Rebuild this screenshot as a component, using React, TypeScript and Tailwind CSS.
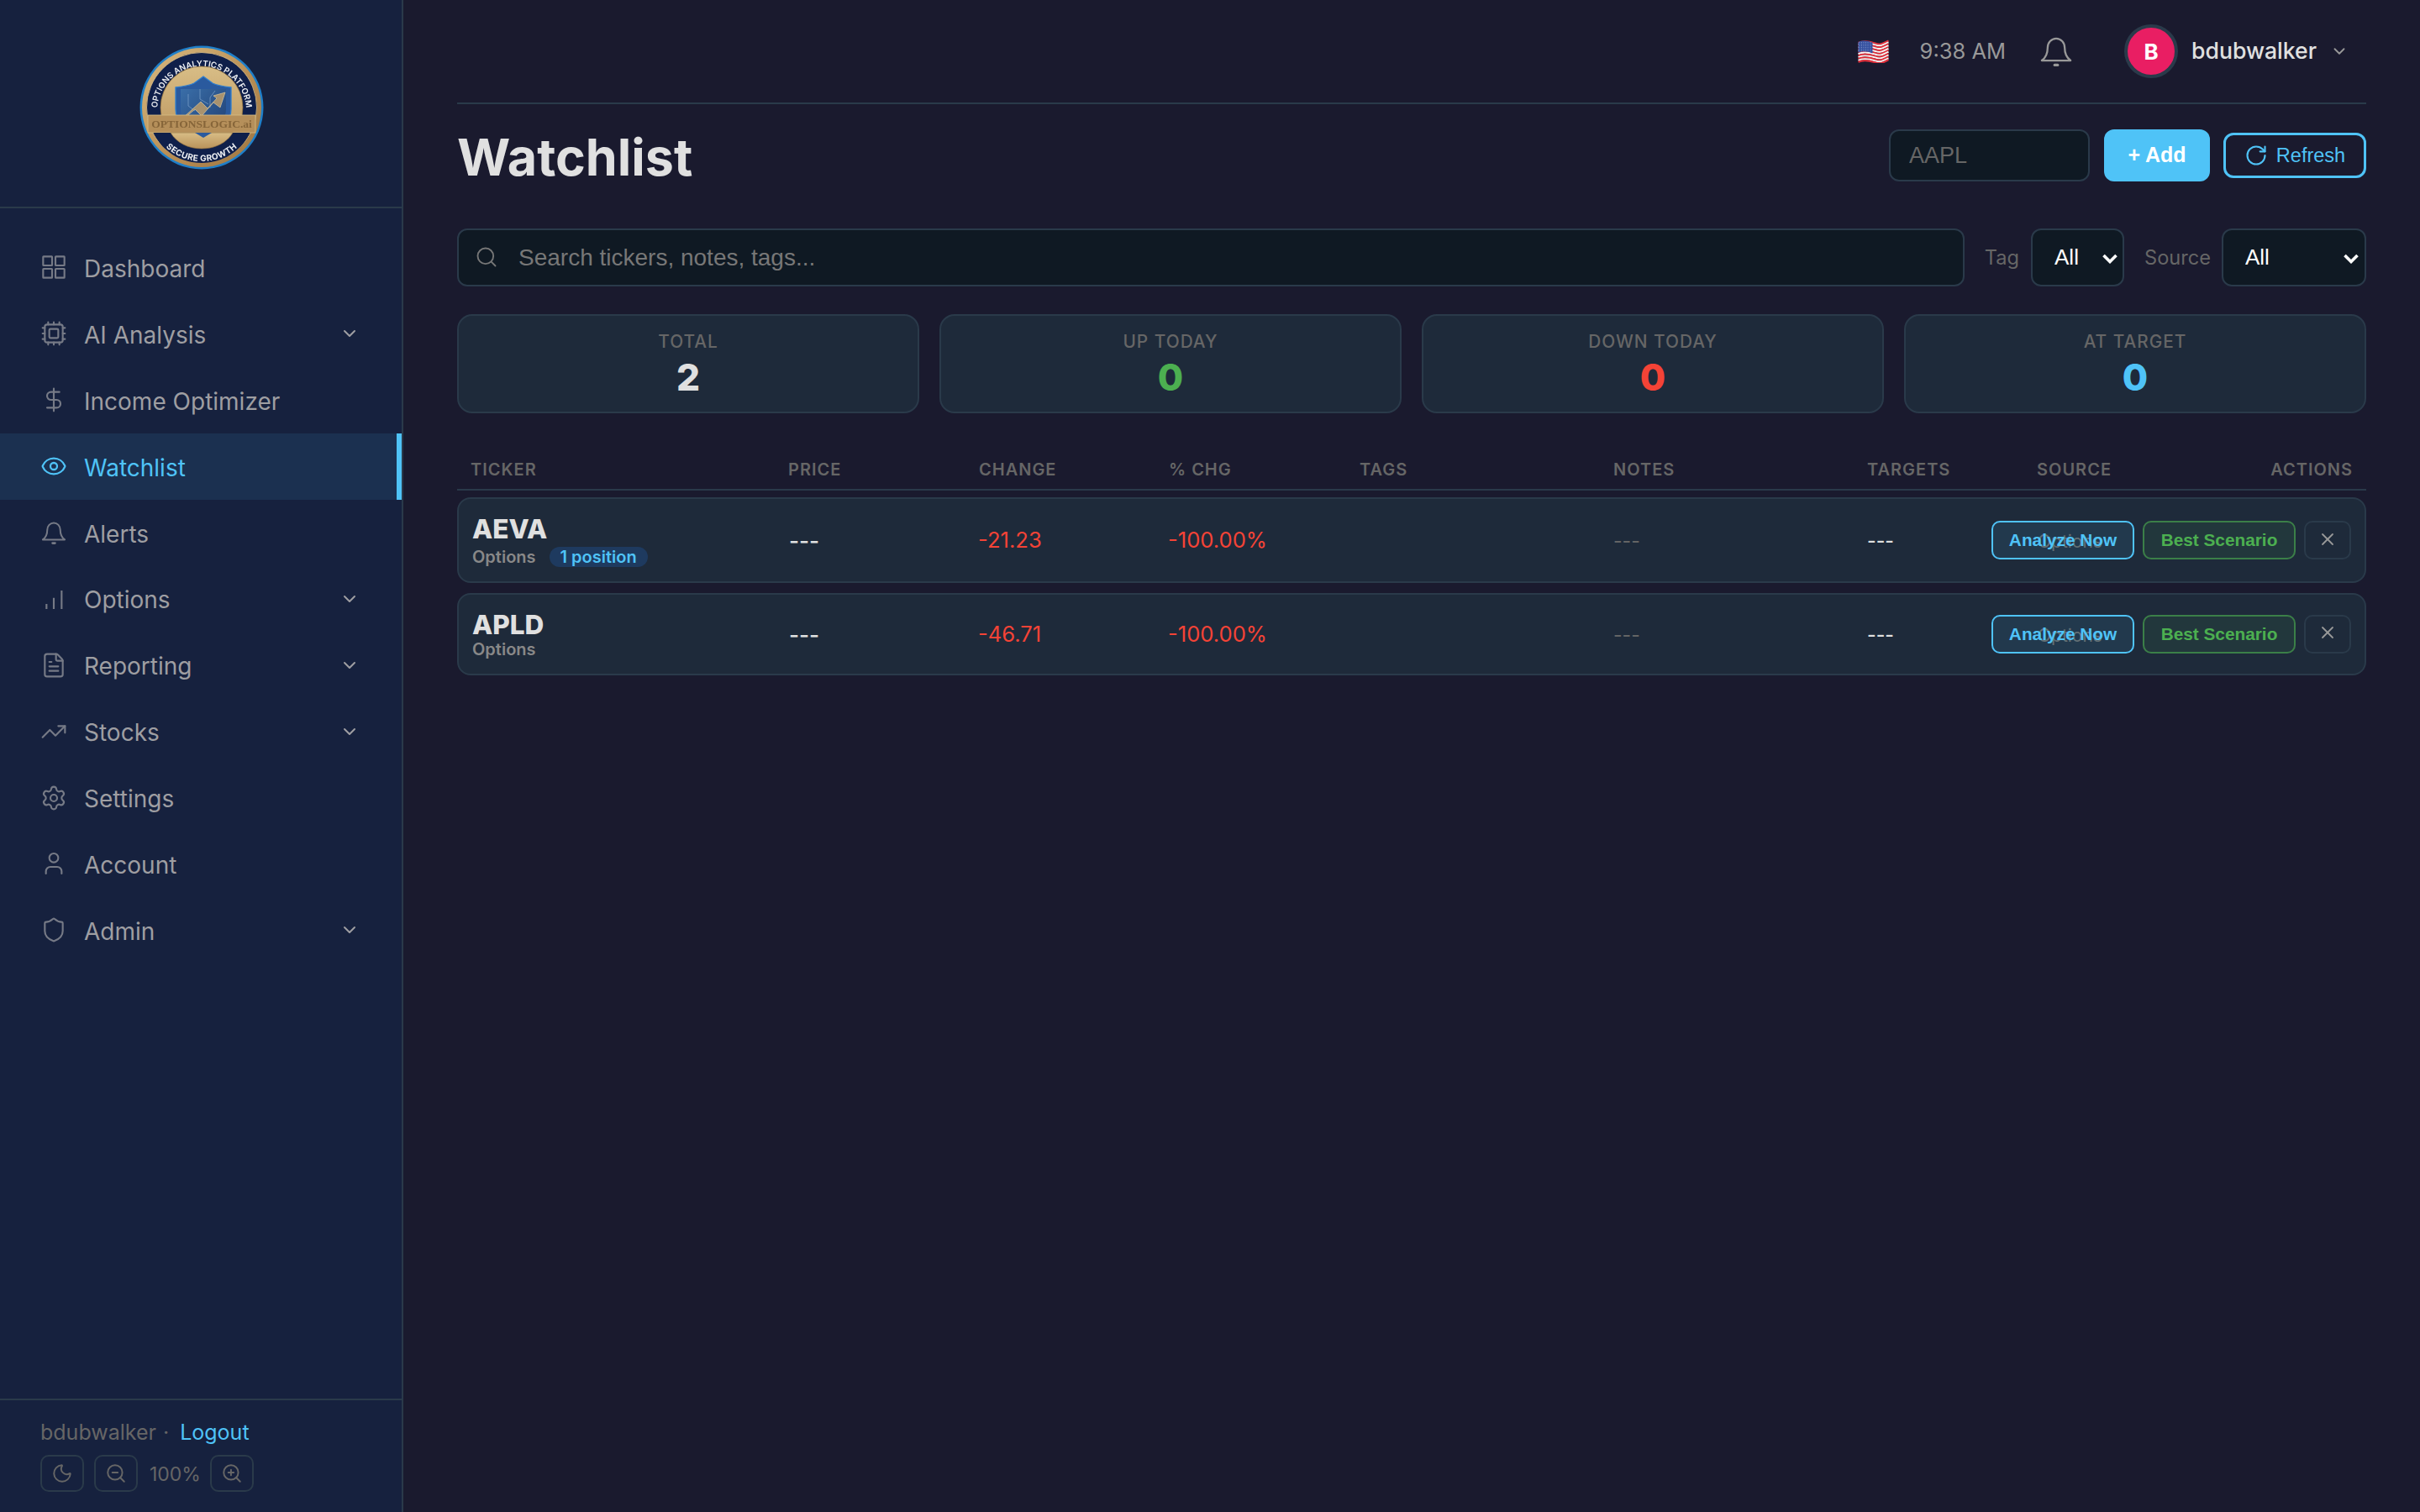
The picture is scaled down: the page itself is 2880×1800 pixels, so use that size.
import React from "react";
import { ChevronDown, Cpu, DollarSign, Eye, FileText, TrendingUp, Settings, User, Shield, Moon, ZoomIn, ZoomOut, Search, RotateCw, X } from "lucide-react";

function GridIcon({ className }: { className?: string }) {
  return (
    <svg viewBox="0 0 24 24" width="32" height="32" fill="none" stroke="currentColor" strokeWidth="1.6" className={className}>
      <rect x="2.5" y="2.5" width="8" height="8" rx="0.4" />
      <rect x="13.5" y="2.5" width="8" height="8" rx="0.4" />
      <rect x="2.5" y="13.5" width="8" height="8" rx="0.4" />
      <rect x="13.5" y="13.5" width="8" height="8" rx="0.4" />
    </svg>
  );
}
function BellIcon({ className, size = 32, sw = 1.5 }: { className?: string; size?: number; sw?: number }) {
  return (
    <svg viewBox="0 0 24 24" width={size} height={size} fill="none" stroke="currentColor" strokeWidth={sw} strokeLinecap="round" strokeLinejoin="round" className={className}>
      <path d="M6.200 9.500a5.800 6.200 0 0 1 11.600 0c0 4.500 1.200 6.800 4 8.800H2.200c2.800-2 4-4.300 4-8.800z" />
      <path d="M11 21.400h2" strokeWidth={sw + 0.6} />
    </svg>
  );
}
function BarsIcon({ className }: { className?: string }) {
  return (
    <svg viewBox="0 0 24 24" width="32" height="32" fill="none" stroke="currentColor" strokeWidth="1.6" className={className}>
      <path d="M5.500 21v-4.500M12 21V11M19 21V4.500" />
    </svg>
  );
}

function Logo() {
  return (
    <svg viewBox="0 0 148 148" width="148" height="148" className="blur-[0.35px]">
      <defs>
        <linearGradient id="gold" x1="0" y1="0" x2="1" y2="1">
          <stop offset="0" stopColor="#d9bb82" />
          <stop offset="0.55" stopColor="#b98f55" />
          <stop offset="1" stopColor="#9c7440" />
        </linearGradient>
        <linearGradient id="disc" x1="0" y1="0" x2="0" y2="1">
          <stop offset="0" stopColor="#d8bd86" />
          <stop offset="1" stopColor="#b9925a" />
        </linearGradient>
        <linearGradient id="sh" x1="0" y1="0" x2="1" y2="1">
          <stop offset="0" stopColor="#3a6ea8" />
          <stop offset="1" stopColor="#1f3f73" />
        </linearGradient>
        <path id="topArc" d="M 21 78 A 53 53 0 0 1 127 78" />
        <path id="botArc" d="M 11 74 A 63 64 0 0 0 137 74" />
      </defs>
      <circle cx="74" cy="74" r="73.500" fill="#1f7fc9" />
      <circle cx="74" cy="74" r="71" fill="url(#gold)" />
      <circle cx="74" cy="74" r="65.500" fill="#0f1f4a" stroke="#d8bd86" strokeWidth="0.8" />
      <text fontFamily="Inter, sans-serif" fontSize="9.800" fontWeight="600" fill="#eef0f4">
        <textPath href="#topArc" startOffset="50%" textAnchor="middle">OPTIONS ANALYTICS PLATFORM</textPath>
      </text>
      <circle cx="74" cy="74" r="49" fill="url(#disc)" stroke="#8a6a3a" strokeWidth="0.7" />
      <path d="M76 37l11 8c6 3 14 4 22 5v26c0 18-15 28-33 36-18-8-33-18-33-36V50c8-1 16-2 22-5z" fill="#2a5a9e" stroke="#2f7fd0" strokeWidth="1.300" />
      <path d="M49 52h54v24c0 13-12 24-27 31-15-7-27-18-27-31z" fill="url(#sh)" />
      <path d="M58 58v14l8 6M72 52v12l10 6M90 54l-6 8v12" fill="none" stroke="#7fa3cc" strokeWidth="0.7" />
      <path d="M52 88l14-12 8 8 14-16 8 6 6-18-14 4 4 3-11 12-8-8-21 19z" fill="#a8926e" stroke="#d8c7a0" strokeWidth="0.7" />
      <rect x="10" y="83" width="128" height="21" fill="#b58f5a" stroke="#d8bd86" strokeWidth="0.8" />
      <text x="74" y="98" textAnchor="middle" fontFamily="'Liberation Serif', serif" fontSize="13.500" fontWeight="700" fill="#866539">OPTIONSLOGIC.ai</text>
      <path d="M17 104h114c-9 21-31 36-57 36s-48-15-57-36z" fill="#0f1f4a" />
      <path d="M37 104h74c-7 12-21 19-37 19s-30-7-37-19z" fill="url(#disc)" stroke="#8a6a3a" strokeWidth="0.6" />
      <path d="M66 104h20l-10 6z" fill="#2a5a9e" />
      <text fontFamily="Inter, sans-serif" fontSize="10" fontWeight="700" fill="#eef0f4" letterSpacing="0.4">
        <textPath href="#botArc" startOffset="50%" textAnchor="middle">SECURE GROWTH</textPath>
      </text>
    </svg>
  );
}

function Flag() {
  const stripes = Array.from({ length: 13 }, (_, i) => i);
  const h = 1.9;
  return (
    <svg viewBox="0 0 36 28" width="37" height="28">
      {stripes.map((i) => {
        const y = 3 + i * h;
        return (
          <path
            key={i}
            d={`M0 ${y + 1} C 6 ${y - 2}, 12 ${y - 1}, 20 ${y + 1.5} S 30 ${y + 1}, 36 ${y - 1.5}`}
            fill="none"
            stroke={i % 2 === 0 ? "#e0303c" : "#f6f6f6"}
            strokeWidth={h + 0.2}
          />
        );
      })}
      <path d="M0 3C6 .5 11 1.500 17 3.800V16.500C11 14 6 13.500 0 15.500z" fill="#34509f" />
      {[3.5, 5.5, 7.5, 9.5, 11.5, 13.5].map((y) =>
        [1.5, 4, 6.5, 9, 11.5, 14.5].map((x) => <circle key={`${x}-${y}`} cx={x} cy={y} r="0.45" fill="#c9d3ee" />)
      )}
    </svg>
  );
}

const navIcon = "text-[#767a86] shrink-0";
const lucideProps = { size: 32, strokeWidth: 1.6, className: navIcon };

const nav: { label: string; icon: React.ReactNode; chev?: boolean; active?: boolean }[] = [
  { label: "Dashboard", icon: <GridIcon className={navIcon} /> },
  { label: "AI Analysis", icon: <Cpu {...lucideProps} />, chev: true },
  { label: "Income Optimizer", icon: <DollarSign {...lucideProps} /> },
  { label: "Watchlist", icon: <Eye size={32} strokeWidth={1.7} className="text-[#4fc3f7] shrink-0" />, active: true },
  { label: "Alerts", icon: <BellIcon className={navIcon} /> },
  { label: "Options", icon: <BarsIcon className={navIcon} />, chev: true },
  { label: "Reporting", icon: <FileText {...lucideProps} />, chev: true },
  { label: "Stocks", icon: <TrendingUp {...lucideProps} />, chev: true },
  { label: "Settings", icon: <Settings {...lucideProps} /> },
  { label: "Account", icon: <User {...lucideProps} /> },
  { label: "Admin", icon: <Shield {...lucideProps} />, chev: true },
];

function Sidebar() {
  return (
    <aside className="w-[480px] h-full shrink-0 bg-[#16213e] border-r-2 border-[#2a3a4a] flex flex-col">
      <div className="h-[248px] border-b-2 border-[#2a3a4a] flex justify-center pt-[54px] pl-[2px] shrink-0">
        <Logo />
      </div>
      <nav className="flex flex-col pt-[31px]">
        {nav.map((n) => (
          <div
            key={n.label}
            className={
              n.active
                ? "h-[78.9px] flex items-center gap-[20px] pl-[48px] pr-[50px] bg-[#1b3050] border-r-[6px] border-[#4fc3f7] text-[#4fc3f7] text-[28px]"
                : "h-[78.9px] flex items-center gap-[20px] pl-[48px] pr-[50px] text-[#9e9ea2] text-[28px]"
            }
          >
            {n.icon}
            <span className="mt-[3px]">{n.label}</span>
            {n.chev && <ChevronDown size={24} strokeWidth={2} className="ml-auto text-[#9e9ea2]" />}
          </div>
        ))}
      </nav>
      <div className="mt-auto h-[135px] border-t-2 border-[#2a3a4a] pl-[48px] pt-[20px] shrink-0">
        <div className="flex items-center text-[25px] leading-[36px] text-[#666666]">
          <span>bdubwalker</span>
          <span className="ml-[8px]">·</span>
          <span className="ml-[13px] text-[#4fc3f7]">Logout</span>
        </div>
        <div className="flex items-center mt-[9px] text-[#666666]">
          <div className="w-[52px] h-[44px] border-2 border-[#2a3a4a] rounded-[10px] flex items-center justify-center">
            <Moon size={26} strokeWidth={1.8} />
          </div>
          <div className="ml-[12px] w-[52px] h-[44px] border-2 border-[#2a3a4a] rounded-[10px] flex items-center justify-center">
            <ZoomOut size={26} strokeWidth={1.8} />
          </div>
          <span className="ml-[14px] w-[72px] text-[23px] mt-[2px]">100%</span>
          <div className="w-[52px] h-[44px] border-2 border-[#2a3a4a] rounded-[10px] flex items-center justify-center">
            <ZoomIn size={26} strokeWidth={1.8} />
          </div>
        </div>
      </div>
    </aside>
  );
}

function Sel({ width, arrowRight }: { width: string; arrowRight: string }) {
  return (
    <div className={`relative ${width} h-[69px]`}>
      <select className="appearance-none w-full h-full bg-[#0f1923] border-2 border-[#2a3a4a] rounded-[12px] pl-[26px] text-[26px] text-white font-['Liberation_Sans',Arial,sans-serif] outline-none">
        <option>All</option>
      </select>
      <svg viewBox="0 0 18 12" width="18" height="12" fill="none" stroke="#ffffff" strokeWidth="3.600" className={`absolute top-[30px] ${arrowRight}`}>
        <path d="M1.500 2l7.500 7.500L16.500 2" />
      </svg>
    </div>
  );
}

const gridCols = "grid grid-cols-[378px_227px_226px_227px_302px_302px_202px_202px_minmax(0,1fr)]";

const stats = [
  { label: "TOTAL", value: "2", color: "text-[#e0e0e0]" },
  { label: "UP TODAY", value: "0", color: "text-[#4caf50]" },
  { label: "DOWN TODAY", value: "0", color: "text-[#f44336]" },
  { label: "AT TARGET", value: "0", color: "text-[#4fc3f7]" },
];

const rows = [
  { t: "AEVA", ch: "-21.23", badge: "1 position", h: "h-[102px]", sub: "mt-[2px]", xo: "mb-[2px]" },
  { t: "APLD", ch: "-46.71", badge: "", h: "h-[98px]", sub: "mt-[-2px]", xo: "mb-[5px]" },
];

const btnFont = "font-['Liberation_Sans',Arial,sans-serif]";

function Row({ r }: { r: (typeof rows)[number] }) {
  return (
    <div className={`${gridCols} ${r.h} items-center bg-[#1e2a3a] border-2 border-[#2a3a4a] rounded-[16px] pl-[15px] pr-[16px]`}>
      <div className="pl-[1px]">
        <div className="text-[31.5px] leading-[38px] font-extrabold text-[#e0e0e0]">{r.t}</div>
        <div className={`flex items-center h-[24px] ${r.sub}`}>
          <span className="text-[20px] font-semibold text-[#888888]">Options</span>
          {r.badge && (
            <span className="ml-[16px] h-[24px] px-[13px] rounded-full bg-[#1e3a5f] text-[#4fc3f7] text-[20px] font-semibold leading-[24px]">
              {r.badge}
            </span>
          )}
        </div>
      </div>
      <div className="text-[26px] text-[#e0e0e0] font-medium">---</div>
      <div className="text-[25.6px] text-[#f44336] -ml-[2px]">{r.ch}</div>
      <div className="text-[25.6px] text-[#f44336] -ml-[2px]">-100.00%</div>
      <div />
      <div className="text-[23px] mt-[2px] -ml-[1px] text-[#666666]">---</div>
      <div className="text-[23px] mt-[2px] -ml-[1px] text-[#e0e0e0] font-medium">---</div>
      <div className="text-[21px] mt-[3px] text-[#666666]">Options</div>
      <div className="flex justify-end items-center gap-[10px] whitespace-nowrap">
        <button className={`${btnFont} h-[46px] w-[170px] border-2 border-[#4fc3f7] rounded-[10px] bg-[#4fc3f7]/10 text-[#4fc3f7] text-[20.8px] font-bold shrink-0`}>
          Analyze Now
        </button>
        <button className={`${btnFont} h-[46px] w-[182px] border-2 border-[#4caf50]/60 rounded-[10px] bg-[#4caf50]/10 text-[#4caf50] text-[20.8px] font-bold shrink-0`}>
          Best Scenario
        </button>
        <button className="h-[46px] w-[56px] border-2 border-[#2a3a4a] rounded-[10px] flex items-center justify-center text-[#999999] shrink-0">
          <X size={24} strokeWidth={1.8} className={r.xo} />
        </button>
      </div>
    </div>
  );
}

export default function App() {
  return (
    <div className="w-[2880px] h-[1800px] flex bg-[#1a1a2e] font-['Inter',sans-serif] overflow-hidden">
      <Sidebar />
      <main className="flex-1 min-w-0 pl-[64px] pr-[64px]">
        <header className="h-[124px] border-b-2 border-[#2a3a4a] flex items-center justify-end">
          <Flag />
          <span className="ml-[37px] text-[25.5px] text-[#999999]">9:38 AM</span>
          <BellIcon size={42} sw={1.3} className="ml-[39px] text-[#999999]" />
          <div className="ml-[60px] w-[64px] h-[64px] rounded-full bg-[#e91e63] border-[4px] border-[#2a3a4a] flex items-center justify-center text-white text-[26px] font-bold">
            B
          </div>
          <span className="ml-[16px] text-[26.6px] font-medium text-[#e0e0e0]">bdubwalker</span>
          <ChevronDown size={22} strokeWidth={2} className="ml-[16px] mr-[21px] text-[#999999]" />
        </header>
        <div className="flex items-center mt-[30px] h-[62px]">
          <h1 className="text-[61px] font-bold text-[#e0e0e0] leading-none mt-[4px]">Watchlist</h1>
          <input
            placeholder="AAPL"
            className={`${btnFont} ml-auto w-[239px] h-[62px] bg-[#0f1923] border-2 border-[#2a3a4a] rounded-[12px] px-[22px] text-[27px] placeholder:text-[#666666] outline-none`}
          />
          <button className={`${btnFont} ml-[17px] w-[126px] h-[62px] bg-[#4fc3f7] rounded-[12px] text-white text-[25px] font-bold`}>+ Add</button>
          <button className={`${btnFont} ml-[16px] w-[170px] h-[54px] border-[3px] border-[#4fc3f7] rounded-[12px] text-[#4fc3f7] text-[23.5px] flex items-center justify-center gap-[10px]`}>
            <RotateCw size={28} strokeWidth={1.8} />
            <span className="mt-[2px]">Refresh</span>
          </button>
        </div>
        <div className="flex items-center mt-[56px] h-[69px]">
          <div className="relative flex-1">
            <Search size={28} strokeWidth={1.6} className="absolute left-[21px] top-[20px] text-[#777777]" />
            <input
              placeholder="Search tickers, notes, tags..."
              className={`${btnFont} w-full h-[69px] bg-[#0f1923] border-2 border-[#2a3a4a] rounded-[12px] pl-[71px] text-[28px] placeholder:text-[#777777] outline-none`}
            />
          </div>
          <span className="ml-[24px] text-[23.6px] text-[#666666]">Tag</span>
          <div className="ml-[14px]">
            <Sel width="w-[111px]" arrowRight="right-[8px]" />
          </div>
          <span className="ml-[24px] text-[23.6px] text-[#666666]">Source</span>
          <div className="ml-[13px]">
            <Sel width="w-[172px]" arrowRight="right-[9px]" />
          </div>
        </div>
        <div className="grid grid-cols-4 gap-[24px] mt-[33px]">
          {stats.map((s) => (
            <div key={s.label} className="h-[118px] bg-[#1e2a3a] border-2 border-[#2a3a4a] rounded-[18px] flex flex-col items-center pt-[17px]">
              <div className="text-[20.8px] leading-[28px] text-[#666666] tracking-[1px] font-medium">{s.label}</div>
              <div className={`text-[44px] leading-[50px] mt-[3px] font-extrabold ${s.color}`}>{s.value}</div>
            </div>
          ))}
        </div>
        <div className={`${gridCols} mt-[52px] h-[40px] items-start border-b-2 border-[#2a3a4a] pl-[16px] text-[20px] font-semibold text-[#666666] tracking-[1px]`}>
          <div>TICKER</div>
          <div>PRICE</div>
          <div>CHANGE</div>
          <div>% CHG</div>
          <div>TAGS</div>
          <div>NOTES</div>
          <div>TARGETS</div>
          <div>SOURCE</div>
          <div className="text-right pr-[16px]">ACTIONS</div>
        </div>
        <div className="flex flex-col gap-[12px] mt-[8px]">
          {rows.map((r) => (
            <Row key={r.t} r={r} />
          ))}
        </div>
      </main>
    </div>
  );
}
